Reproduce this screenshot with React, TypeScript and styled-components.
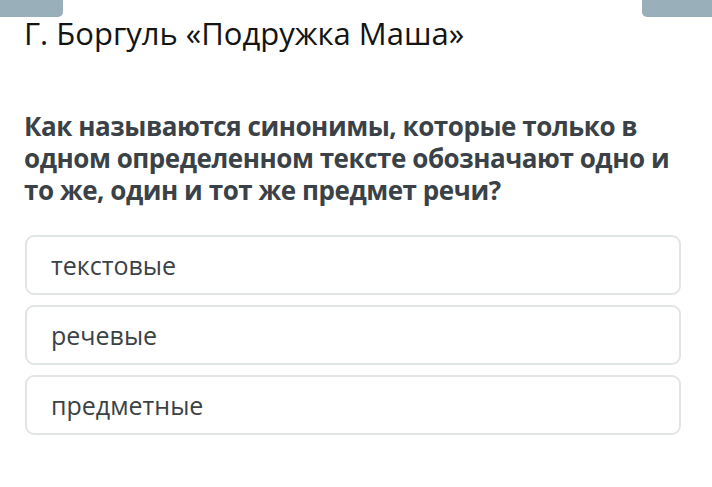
import React from "react";
import styled, { createGlobalStyle } from "styled-components";

const Global = createGlobalStyle`
  html, body { margin: 0; padding: 0; background: #ffffff; }
  body { font-family: "Open Sans", "Noto Sans", sans-serif; }
`;

const Page = styled.div`
  width: 712px;
  height: 487px;
  display: flex;
  flex-direction: column;
  overflow: hidden;
`;

const TabBar = styled.div`
  display: flex;
  justify-content: space-between;
  height: 17px;
`;

const Tab = styled.div<{ $side: "left" | "right"; $w: number }>`
  width: ${(p) => p.$w}px;
  height: 17px;
  background: #99afb9;
  border-bottom-${(p) => (p.$side === "left" ? "right" : "left")}-radius: 5px;
`;

const Content = styled.div`
  padding: 0 18px 0 24px;
  display: flex;
  flex-direction: column;
`;

const Title = styled.h1`
  margin: -4px 0 0 0;
  font-size: 31px;
  font-weight: 400;
  line-height: 40px;
  color: #141414;
`;

const Question = styled.p`
  margin: 57px 0 0 0;
  font-size: 26px;
  font-weight: 700;
  letter-spacing: -0.45px;
  line-height: 32px;
  color: #3a4247;
`;

const Options = styled.div`
  margin: 29px 13px 0 1px;
  display: flex;
  flex-direction: column;
  gap: 10px;
`;

const Option = styled.div`
  height: 60px;
  box-sizing: border-box;
  border: 2px solid #e1e6e3;
  border-radius: 9px;
  display: flex;
  align-items: center;
  padding-left: 24px;
  font-size: 25px;
  color: #3b4246;
`;

const options = ["текстовые", "речевые", "предметные"];

export default function App() {
  return (
    <Page>
      <Global />
      <TabBar>
        <Tab $side="left" $w={63} />
        <Tab $side="right" $w={70} />
      </TabBar>
      <Content>
        <Title>Г. Боргуль «Подружка Маша»</Title>
        <Question>
          Как называются синонимы, которые только в одном определенном тексте
          обозначают одно и то же, один и тот же предмет речи?
        </Question>
        <Options>
          {options.map((o) => (
            <Option key={o}>{o}</Option>
          ))}
        </Options>
      </Content>
    </Page>
  );
}
